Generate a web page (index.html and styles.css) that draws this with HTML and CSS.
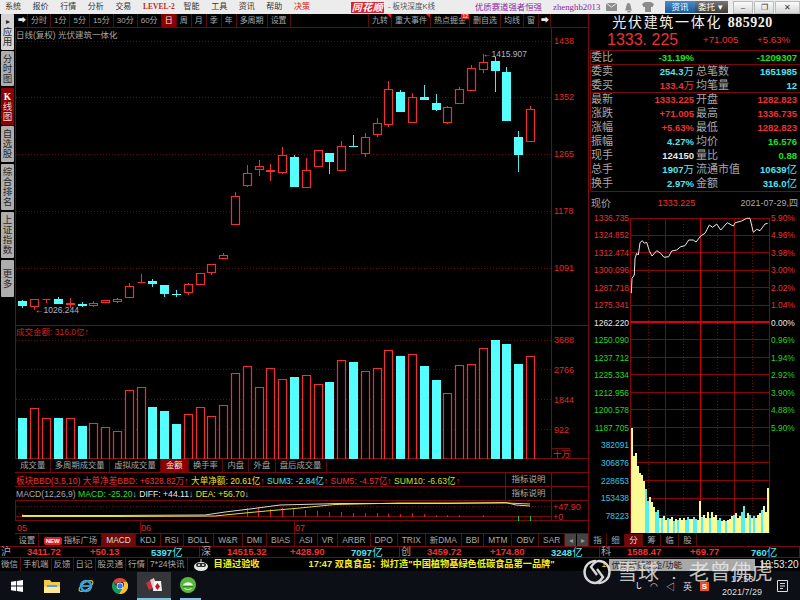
FILE: index.html
```html
<!DOCTYPE html>
<html lang="zh">
<head>
<meta charset="utf-8">
<title>同花顺</title>
<link rel="stylesheet" href="styles.css">
</head>
<body>
<div class="screen">
  <header class="menubar">
    <nav class="menu">
      <span>系统</span><span>报价</span><span>行情</span><span>分析</span><span>交易</span><span class="level2">LEVEL-2</span><span>智能</span><span>工具</span><span>资讯</span><span>帮助</span><span class="decide">决策</span>
    </nav>
    <span class="logo">同花顺</span>
    <span class="doc-title">- 板块深度K线</span>
    <span class="promo">优质赛道强者恒强</span>
    <span class="user">zhenghb2013</span>
    <svg class="top-icons" width="48" height="12" viewBox="0 0 48 12"><path class="ti" d="M0 2h11v8H0z"/><path class="tl" d="M0 2l5.500 4L11 2"/><path class="ti" d="M19 9.500c1-1 1-5 2-6.500 .5-1.500 2.500-1.500 3 0 1 1.500 1 5.500 2 6.500zM21.500 10h3v1.500h-3z"/><path class="ti" d="M36 3l3-2h6l3 2 -1.500 3H45v5h-6V6h-1.500z"/></svg>
    <span class="btn-news">资讯</span>
    <span class="btn-trade">委托<i class="caret">▾</i></span>
    <span class="win-btn">–</span><span class="win-btn">❐</span><span class="win-btn win-close">✕</span>
  </header>

  <div class="workspace">
    <aside class="sidebar">
      <div class="side-tab side-first"><i class="side-arrow">▸</i>应用</div>
      <div class="side-tab side-time">分时图</div>
      <div class="side-tab side-active"><b class="side-k">K</b>线图</div>
      <div class="side-tab side-watch">自选股</div>
      <div class="side-tab side-rank">综合排名</div>
      <div class="side-tab side-rank">上证指数</div>
      <div class="side-tab side-more">更多</div>
    </aside>

    <main class="center">
      <div class="toolbar">
        <span class="tool tool-arrow">➡</span><span class="tool">分时</span><span class="tool">1分</span><span class="tool">5分</span><span class="tool">15分</span><span class="tool">30分</span><span class="tool">60分</span><span class="tool tool-on">日</span><span class="tool">周</span><span class="tool">月</span><span class="tool">季</span><span class="tool">年</span><span class="tool">多周期</span><span class="tool">设置</span>
        <span class="tool-gap"></span>
        <span class="tool tool-flag">九转</span><span class="tool tool-flag">重大事件</span><span class="tool tool-hot">热点掘金<i class="hot-badge">12</i></span><span class="tool">删自选</span><span class="tool">均线</span><span class="tool">窗</span><span class="tool tool-arrow">➡</span>
      </div>

      <svg class="kline" width="573" height="432" viewBox="15 27 573 432">
        <path class="dots" d="M16 41.500H551M16 97.500H551M16 154.500H551M16 211.500H551M16 268.500H551M16 340.500H551M16 369.500H551M16 399.500H551M16 429.500H551"/>
        <path class="frame" d="M15.500 27V459M551.500 27V459M15 325.500H588M15 458.500H588M552 448.500H570V458.500"/>
        <text class="k-title" x="16" y="38">日线(复权) 光伏建筑一体化</text>
        <g class="axis">
          <text x="554" y="44">1438</text><text x="554" y="100">1352</text><text x="554" y="157">1265</text><text x="554" y="214">1178</text><text x="554" y="271">1091</text>
          <text x="554" y="343">3688</text><text x="554" y="373">2766</text><text x="554" y="403">1844</text><text x="554" y="433">922</text>
        </g>
        <text class="unit" x="553" y="457">十万</text>
        <text class="vol-title" x="16" y="335">成交金额: 316.0亿↑</text>

        <path class="wick-red" d="M34.500 306V310M46.500 300V303M70.500 298V308M93.500 301V307M117.500 298V303M129.500 283V298M141.500 274V283M188.500 283V295M200.500 273V285M211.500 264V275M223.500 253V259M235.500 192V225M247.500 165V187M259.500 160V176M270.500 164V181M282.500 147V174M306.500 158V188M318.500 150V167M341.500 141V171M365.500 133V157M377.500 118V137M388.500 81V127M412.500 93V123M447.500 106V124M459.500 87V104M471.500 65V91M483.500 54V73M530.500 106V110"/>
        <path class="wick-cyan" d="M22.500 300V308M58.500 297V304M82.500 302V307M152.500 279V287M164.500 294V297M176.500 290V297M294.500 155V157M329.500 162V174M353.500 135V147M400.500 90V92M424.500 85V98M436.500 94V111M495.500 57V92M506.500 67V72M518.500 131V172"/>
        <path class="body-red" d="M30.500 299.500h8V306.500h-8zM42.500 299.500h8M66.500 303.500h8V304.500h-8zM89.500 303.500h8V305.500h-8zM101.500 300.500h8V302.500h-8zM113.500 299.500h8V301.500h-8zM125.500 286.500h8V297.500h-8zM137.500 282.500h8M184.500 284.500h8V292.500h-8zM196.500 273.500h8V284.500h-8zM207.500 264.500h8V272.500h-8zM219.500 255.500h8V258.500h-8zM231.500 196.500h8V224.500h-8zM243.500 173.500h8V185.500h-8zM255.500 166.500h8V169.500h-8zM266.500 170.500h8V171.500h-8zM278.500 155.500h8V172.500h-8zM302.500 170.500h8V187.500h-8zM314.500 150.500h8V166.500h-8zM337.500 146.500h8V170.500h-8zM361.500 137.500h8V153.500h-8zM373.500 123.500h8V134.500h-8zM384.500 89.500h8V124.500h-8zM408.500 97.500h8V122.500h-8zM443.500 107.500h8V122.500h-8zM455.500 89.500h8V103.500h-8zM467.500 68.500h8V90.500h-8zM479.500 62.500h8V69.500h-8zM526.500 109.500h8V141.500h-8z"/>
        <path class="body-cyan" d="M18 301h9V306h-9zM54 299h9V304h-9zM78 304h9V306h-9zM148 281h9V284h-9zM160 285h9V294h-9zM172 294h9V295h-9zM290 157h9V187h-9zM325 153h9V162h-9zM349 146h9V147h-9zM396 92h9V112h-9zM420 97h9V100h-9zM432 103h9V110h-9zM491 61h9V71h-9zM502 72h9V121h-9zM514 137h9V155h-9z"/>
        <text class="note" x="35" y="313">←1026.244</text>
        <text class="note" x="483" y="57">←1415.907</text>

        <path class="body-red" d="M30.500 408.500h8V459h-8zM42.500 418.500h8V459h-8zM66.500 418.500h8V459h-8zM89.500 423.500h8V459h-8zM101.500 427.500h8V459h-8zM113.500 431.500h8V459h-8zM125.500 390.500h8V459h-8zM137.500 387.500h8V459h-8zM184.500 414.500h8V459h-8zM196.500 407.500h8V459h-8zM207.500 416.500h8V459h-8zM219.500 405.500h8V459h-8zM231.500 373.500h8V459h-8zM243.500 366.500h8V459h-8zM255.500 387.500h8V459h-8zM266.500 368.500h8V459h-8zM278.500 379.500h8V459h-8zM302.500 375.500h8V459h-8zM314.500 384.500h8V459h-8zM337.500 360.500h8V459h-8zM361.500 371.500h8V459h-8zM373.500 368.500h8V459h-8zM384.500 350.500h8V459h-8zM408.500 354.500h8V459h-8zM443.500 393.500h8V459h-8zM455.500 365.500h8V459h-8zM467.500 364.500h8V459h-8zM479.500 348.500h8V459h-8zM526.500 356.500h8V459h-8z"/>
        <path class="body-cyan" d="M18 418h9V459h-9zM54 418h9V459h-9zM78 426h9V459h-9zM148 407h9V459h-9zM160 411h9V459h-9zM172 424h9V459h-9zM290 377h9V459h-9zM325 382h9V459h-9zM349 362h9V459h-9zM396 356h9V459h-9zM420 366h9V459h-9zM432 380h9V459h-9zM491 340h9V459h-9zM502 344h9V459h-9zM514 364h9V459h-9z"/>
      </svg>

      <div class="ind-tabs">
        <span class="ind-tab">成交量</span><span class="ind-tab">多周期成交量</span><span class="ind-tab">虚拟成交量</span><span class="ind-tab ind-on">金额</span><span class="ind-tab">换手率</span><span class="ind-tab">内盘</span><span class="ind-tab">外盘</span><span class="ind-tab">盘后成交量</span>
      </div>

      <div class="ind-row">
        <span class="ind-text"><span class="red">板块BBD(3,5,10) 大单净差BBD: +6328.82万↑</span> <span class="yellow">大单净额: 20.61亿<i class="red">↑</i></span> <span class="cyan">SUM3: -2.84亿<i class="red">↑</i></span> <span class="red">SUM5: -4.57亿↑</span> <span class="lime">SUM10: -6.63亿<i class="red">↑</i></span></span>
        <span class="explain">指标说明</span>
      </div>
      <div class="ind-row">
        <span class="ind-text"><span class="gray">MACD(12,26,9)</span> <span class="green">MACD: -25.20<i class="cyan">↓</i></span> <span class="white">DIFF: +44.11<i class="cyan">↓</i></span> <span class="yellow">DEA: +56.70<i class="cyan">↓</i></span></span>
        <span class="explain">指标说明</span>
      </div>

      <svg class="macd" width="573" height="33" viewBox="15 501 573 33">
        <path class="dots" d="M16 506.500H551"/>
        <path class="frame" d="M15.500 501V521M551.500 501V521M16 516.500H551M15 520.500H588M15 533.500H588M140.500 521V533M294.500 521V533"/>
        <path class="bar-red" d="M22.500 517V514M247.500 517V508M258.500 517V507M270.500 517V509M282.500 517V508M293.500 517V508M305.500 517V510M317.500 517V511M329.500 517V512M341.500 517V512M353.500 517V513M365.500 517V513M377.500 517V513M388.500 517V514M400.500 517V514M412.500 517V513M424.500 517V514M436.500 517V515M447.500 517V515M459.500 517V515M483.500 517V515"/>
        <path class="bar-green" d="M518.500 516V521M530.500 516V521"/>
        <path class="line-white" d="M22 515.500H110L205 515L225 512L250 509L280 505L340 503.500H450L506 502.500L516 505L530 506"/>
        <path class="line-yellow" d="M22 516.500H120L215 516L250 512.500L300 508L335 504.500L400 503H506L530 504"/>
        <g class="axis"><text x="553" y="510">+47.90</text><text x="553" y="520">+0</text></g>
        <g class="axis"><text x="17" y="531">05</text><text x="141" y="531">06</text><text x="295" y="531">07</text></g>
      </svg>

      <div class="sub-tabs">
        <span class="sub-tab sub-first">设置</span><span class="sub-tab sub-market"><i class="new">NEW</i>指标广场</span><span class="sub-tab sub-on">MACD</span><span class="sub-tab">KDJ</span><span class="sub-tab">RSI</span><span class="sub-tab">BOLL</span><span class="sub-tab">W&amp;R</span><span class="sub-tab">DMI</span><span class="sub-tab">BIAS</span><span class="sub-tab">ASI</span><span class="sub-tab">VR</span><span class="sub-tab">ARBR</span><span class="sub-tab">DPO</span><span class="sub-tab">TRIX</span><span class="sub-tab">新DMA</span><span class="sub-tab">BBI</span><span class="sub-tab">MTM</span><span class="sub-tab">OBV</span><span class="sub-tab">SAR</span>
        <span class="pager">◂</span><span class="pager">▸</span>
      </div>
    </main>

    <section class="quote">
      <h1 class="q-name">光伏建筑一体化 <b class="q-code">885920</b></h1>
      <div class="q-price">
        <span class="q-last">1333. 225</span><span class="q-diff">+71.005</span><span class="q-diff">+5.63%</span>
      </div>
      <div class="q-table">
        <div class="q-group q-one">
          <div class="q-row"><span class="q-l">委比</span><span class="q-v green">-31.19%</span><span></span><span class="q-v green">-1209307</span></div>
        </div>
        <div class="q-group q-two">
          <div class="q-row"><span class="q-l">委卖</span><span class="q-v cyan">254.3<i class="q-u">万</i></span><span class="q-l">总笔数</span><span class="q-v cyan">1651985</span></div>
          <div class="q-row"><span class="q-l">委买</span><span class="q-v red">133.4<i class="q-u">万</i></span><span class="q-l">均笔量</span><span class="q-v cyan">12</span></div>
        </div>
        <div class="q-group q-seven">
          <div class="q-row"><span class="q-l">最新</span><span class="q-v red">1333.225</span><span class="q-l">开盘</span><span class="q-v red">1282.823</span></div>
          <div class="q-row"><span class="q-l">涨跌</span><span class="q-v red">+71.005</span><span class="q-l">最高</span><span class="q-v red">1336.735</span></div>
          <div class="q-row"><span class="q-l">涨幅</span><span class="q-v red">+5.63%</span><span class="q-l">最低</span><span class="q-v red">1282.823</span></div>
          <div class="q-row"><span class="q-l">振幅</span><span class="q-v cyan">4.27%</span><span class="q-l">均价</span><span class="q-v green">16.576</span></div>
          <div class="q-row"><span class="q-l">现手</span><span class="q-v white">124150</span><span class="q-l">量比</span><span class="q-v green">0.88</span></div>
          <div class="q-row"><span class="q-l">总手</span><span class="q-v cyan">1907<i class="q-u">万</i></span><span class="q-l">流通市值</span><span class="q-v cyan">10639<i class="q-u">亿</i></span></div>
          <div class="q-row"><span class="q-l">换手</span><span class="q-v cyan">2.97%</span><span class="q-l">金额</span><span class="q-v cyan">316.0<i class="q-u">亿</i></span></div>
        </div>
      </div>
      <div class="t-head">
        <span class="t-label">现价</span><span class="t-price">1333.225</span><span class="t-date">2021-07-29,四</span>
      </div>
      <svg class="timechart" width="211" height="324" viewBox="589 210 211 324">
        <path class="t-dots" d="M648.500 218V533M683.500 218V533M717.500 218V533M752.500 218V533"/>
        <path class="t-grid" d="M630.500 218.500H769.500M630.500 235.500H769.500M630.500 252.500H769.500M630.500 270.500H769.500M630.500 287.500H769.500M630.500 305.500H769.500M630.500 339.500H769.500M630.500 357.500H769.500M630.500 374.500H769.500M630.500 392.500H769.500M630.500 409.500H769.500M630.500 427.500H769.500M630.500 445.500H769.500M630.500 462.500H769.500M630.500 480.500H769.500M630.500 498.500H769.500M630.500 515.500H769.500M630.500 218V533M665.500 218V533M734.500 218V533M769.500 218V533"/>
        <path class="t-strong" d="M700.500 218V533"/>
        <path class="t-zero" d="M630.500 322H769.500"/>
        <polyline class="t-line" points="631.300,293.300 632,278.300 634.300,275 635,258.300 636.700,253.300 638.300,255 640,242.700 642.300,240.700 644.300,243.300 646.700,242.300 649.300,250.700 652,256 656.700,250.700 660.700,253.300 664,257.300 668.700,256.700 671.700,251 676.700,250 680.700,246.700 685,245.700 688.700,240 693.300,240 696,242 700.700,236 705,233.300 709.300,225 712.700,227.300 716.700,224 720.700,230 727.300,222.700 733.300,226 735.300,222.700 741.700,221 746.700,218.300 750,218.300 753.300,232.300 756.700,229.300 760,230.700 765,224 767.700,223.300"/>
        <path class="v-yellow" d="M632 428V533M634 456V533M636 453V533M638 466V533M640 473V533M642 475V533M644 481V533M650 497V533M652 502V533M654 507V533M660 518V533M664 516V533M666 520V533M670 519V533M672 517V533M676 519V533M680 518V533M682 520V533M684 518V533M690 519V533M692 519V533M698 520V533M700 501V533M704 515V533M706 518V533M708 512V533M712 512V533M714 517V533M716 515V533M722 521V533M724 520V533M728 520V533M730 519V533M732 516V533M736 513V533M738 518V533M740 516V533M746 518V533M748 513V533M752 518V533M756 518V533M758 515V533M760 513V533M764 506V533M766 512V533M768 488V533"/>
        <path class="v-cyan" d="M646 489V533M648 501V533M656 512V533M658 510V533M662 518V533M668 518V533M674 521V533M678 520V533M686 520V533M688 517V533M694 517V533M696 519V533M702 517V533M710 518V533M718 520V533M720 518V533M726 521V533M734 515V533M742 512V533M744 506V533M750 515V533M754 516V533M762 510V533"/>
        <g class="t-left">
          <text class="t-red" y="221">1336.735</text><text class="t-red" y="238">1324.852</text><text class="t-red" y="256">1312.474</text><text class="t-red" y="273">1300.096</text><text class="t-red" y="291">1287.718</text><text class="t-red" y="308">1275.341</text>
          <text class="t-white" y="326">1262.220</text>
          <text class="t-green" y="343">1250.090</text><text class="t-green" y="361">1237.712</text><text class="t-green" y="378">1225.334</text><text class="t-green" y="396">1212.956</text><text class="t-green" y="413">1200.578</text><text class="t-green" y="431">1187.705</text>
          <text class="t-cyan" y="448">382091</text><text class="t-cyan" y="466">306876</text><text class="t-cyan" y="484">228653</text><text class="t-cyan" y="501">153438</text><text class="t-cyan" y="519">78223</text>
        </g>
        <g class="t-right">
          <text class="t-red" y="221">5.90%</text><text class="t-red" y="238">4.96%</text><text class="t-red" y="256">3.98%</text><text class="t-red" y="273">3.00%</text><text class="t-red" y="291">2.02%</text><text class="t-red" y="308">1.04%</text>
          <text class="t-white" y="326">0.00%</text>
          <text class="t-green" y="343">0.96%</text><text class="t-green" y="361">1.94%</text><text class="t-green" y="378">2.92%</text><text class="t-green" y="396">3.90%</text><text class="t-green" y="413">4.88%</text><text class="t-green" y="431">5.90%</text>
        </g>
      </svg>
      <div class="q-tabs">
        <span class="q-tab">指</span><span class="q-tab">细</span><span class="q-tab q-tab-on">分</span><span class="q-tab">筹</span><span class="q-tab">临</span><span class="q-tab">股</span>
      </div>
    </section>
  </div>

  <div class="indexbar">
    <div class="idx"><span class="idx-name">沪</span><span class="idx-val red">3411.72</span><span class="idx-val red">+50.13</span><span class="idx-val cyan">5397<i class="idx-u">亿</i></span></div>
    <div class="idx"><span class="idx-name">深</span><span class="idx-val red">14515.32</span><span class="idx-val red">+428.90</span><span class="idx-val cyan">7097<i class="idx-u">亿</i></span></div>
    <div class="idx"><span class="idx-name">创</span><span class="idx-val red">3459.72</span><span class="idx-val red">+174.80</span><span class="idx-val cyan">3248<i class="idx-u">亿</i></span></div>
    <div class="idx"><span class="idx-name">科</span><span class="idx-val red">1588.47</span><span class="idx-val red">+69.77</span><span class="idx-val cyan">760<i class="idx-u">亿</i></span></div>
  </div>

  <div class="bottombar">
    <span class="bot">微信</span><span class="bot">手机端</span><span class="bot">反馈</span><span class="bot">日记</span><span class="bot">股灵通</span><span class="bot">行情</span><span class="bot">7*24快讯</span>
    <svg class="robot" width="18" height="13" viewBox="0 0 18 13"><ellipse cx="9" cy="8.500" rx="7" ry="4.500" fill="#e8e8e8"/><rect x="4" y="5" width="10" height="4" rx="2" fill="#333"/><circle cx="7" cy="7" r="1" fill="#fff"/><circle cx="11" cy="7" r="1" fill="#fff"/><path d="M9 1v3" stroke="#ddd"/></svg>
    <div class="ticker"><span class="tick-a">目通过验收</span><span class="tick-b">17:47 双良食品：拟打造"中国植物基绿色低碳食品第一品牌"</span></div>
    <span class="ad-num">1</span><span class="ad">优质短线资金/功能</span>
    <span class="clock">10:53:20</span>
  </div>

  <footer class="taskbar">
    <svg class="tb-start" width="12" height="12" viewBox="0 0 12 12"><path fill="#fff" d="M0 1.700L5 1V5.600H0zM5.800 .9L12 0V5.600H5.800zM0 6.400H5V11L0 10.300zM5.800 6.400H12V12L5.800 11.100z"/></svg>
    <span class="tb-item tb-folder"><svg width="16" height="15" viewBox="0 0 16 15"><path fill="#f2c94c" d="M0 1h6l1.500 2H16v11H0z"/><path fill="#4aa6e0" d="M3 6h10v2H3z"/><path fill="#fde89a" d="M0 8h16v6H0z"/></svg></span>
    <span class="tb-item"><svg width="16" height="16" viewBox="0 0 16 16"><ellipse class="ie-ring" cx="8" cy="8" rx="8" ry="3.500" transform="rotate(-35 8 8)"/><circle class="ie-e" cx="8" cy="8" r="5"/><path class="ie-bar" d="M4 8h8"/></svg></span>
    <span class="tb-item"><svg width="16" height="16" viewBox="0 0 16 16"><path fill="#db4437" d="M8 0a8 8 0 0 1 7 4H8a4 4 0 0 0-3.800 2.800L1.500 3.300A8 8 0 0 1 8 0z"/><path fill="#0f9d58" d="M1.500 3.300L5 9.500a4 4 0 0 0 4.500 2.300L7 16A8 8 0 0 1 1.500 3.300z"/><path fill="#fbc02d" d="M15 4a8 8 0 0 1-8 12l3.500-6a4 4 0 0 0 .3-6z"/><circle cx="8" cy="8" r="3.400" fill="#fff"/><circle cx="8" cy="8" r="2.700" fill="#3b78e7"/></svg></span>
    <span class="tb-item tb-active"><svg width="18" height="14" viewBox="0 0 18 14"><path fill="#c8323c" d="M1 5l5-3 2 8-4 2z"/><path fill="#e8c8c8" d="M5 2l4-2 3 9-4 2z"/><path fill="#f4f4f4" d="M9 3h7l1 10H8z"/><path fill="#c4161c" d="M12.500 5l2.500 3.500-2.500 3.500-2.500-3.500z"/></svg></span>
    <span class="tb-item tb-open"><svg width="16" height="16" viewBox="0 0 16 16"><circle cx="8" cy="8" r="8" fill="#58b83c"/><path d="M3 8.500c1.500-4 8.500-4.500 10 0z" fill="#eaf8e0"/><path d="M3 9.500h10" stroke="#2f7f22"/><path d="M4.500 11.500c2.500 1.500 5 1.500 7 0" stroke="#eaf8e0" fill="none"/></svg></span>
    <span class="tb-spacer"></span>
    <span class="tray"><i class="tray-i">ᒐ</i><i class="tray-i">◠</i><i class="tray-i">◁</i><i class="tray-i">英</i><i class="sogou">S</i></span>
    <span class="tb-clock"><span>17:53</span><span>2021/7/29</span></span>
    <svg class="tb-note" width="11" height="12" viewBox="0 0 11 12"><path d="M.5 .5h10v11h-10zM3 3.500h5M3 6h5M3 8.500h3" fill="none" stroke="#ddd"/></svg>
  </footer>

  <div class="watermark">
    <svg width="28" height="26" viewBox="0 0 28 26"><path d="M13 2C6 2 1.500 7 1.500 13S6 24 12 24c4 0 6-3 8-6l-6-8" fill="none" stroke="#d8d8d8" stroke-width="2.400"/><path d="M15 24c7 0 11.500-5 11.500-11S22 2 16 2c-4 0-6 3-8 6l6 8" fill="none" stroke="#d8d8d8" stroke-width="2.400"/></svg>
    <span class="wm-a">雪球</span><span class="wm-b">:</span><span class="wm-c">老曾佛虎</span>
  </div>
</div>
</body>
</html>
```

FILE: styles.css
```css
* { box-sizing: border-box; }
html, body { margin: 0; padding: 0; background: #000; }
i { font-style: normal; }
h1 { margin: 0; font-weight: normal; }
svg { display: block; flex: none; }

.screen {
  position: relative;
  width: 800px;
  height: 600px;
  overflow: hidden;
  display: flex;
  flex-direction: column;
  background: #000;
  color: #a8a8a8;
  font-family: "Liberation Sans", "Noto Sans CJK SC", sans-serif;
  font-size: 8.5px;
}

.red { color: #f03030; }
.cyan { color: #4fe6f2; }
.green { color: #1fe01f; }
.yellow { color: #f0e020; }
.lime { color: #c8e020; }
.white { color: #e8e8e8; }
.gray { color: #a8a8b8; }

/* menu bar */
.menubar {
  height: 14px;
  flex: none;
  display: flex;
  align-items: center;
  background: #ececec;
  color: #333;
  line-height: 14px;
  white-space: nowrap;
}
.menubar > * { flex: none; }
.menu { display: flex; gap: 11.6px; padding-left: 5px; width: 351px; font-size: 8px; }
.level2 { color: #c81e28; font-family: "Liberation Serif", serif; font-weight: bold; font-size: 7.5px; width: 29px; }
.decide { color: #d82020; }
.logo {
  width: 33px;
  height: 11px;
  line-height: 11px;
  text-align: center;
  background: #d8242c;
  color: #fff;
  font-style: italic;
  font-weight: bold;
  font-size: 10px;
  letter-spacing: .5px;
}
.doc-title { margin-left: 4px; width: 87px; font-size: 7.5px; color: #555; }
.promo { width: 78px; font-size: 8.4px; color: #8a1fa0; }
.user { width: 53px; font-family: "Liberation Serif", serif; font-size: 8.8px; color: #8a1fa0; }
.top-icons { margin-right: 11px; }
.ti { fill: #8c8c8c; }
.tl { fill: none; stroke: #eee; }
.btn-news {
  width: 30px; height: 12px; line-height: 12px; text-align: center;
  background: linear-gradient(#4a8cc8, #1c5a98); color: #fff; font-size: 8.5px;
}
.btn-trade {
  width: 33px; height: 12px; line-height: 12px; padding-left: 3px; margin-right: 5px;
  background: linear-gradient(#777, #3c3c3c); color: #fff; font-size: 8.5px;
}
.caret { margin-left: 3px; }
.win-btn {
  width: 20px; height: 13px; line-height: 12px; text-align: center;
  background: linear-gradient(#fafafa, #d8d8d8); border: 1px solid #bbb; color: #333; font-size: 8px;
  margin-right: 1px;
}
.win-close { width: 25px; margin-right: 0; }

/* workspace */
.workspace { flex: none; height: 532px; display: flex; }

.sidebar { width: 15px; flex: none; padding-left: 1px; display: flex; flex-direction: column; }
.side-tab {
  width: 13px;
  flex: none;
  display: flex;
  flex-direction: column;
  align-items: center;
  justify-content: center;
  background: #aeaeae;
  color: #2a2a2a;
  font-size: 9.5px;
  line-height: 10px;
  text-align: center;
  word-break: break-all;
  border-radius: 1px;
  margin-bottom: 2px;
}
.side-first { height: 36px; background: #d4d4d4; margin-bottom: 1px; }
.side-arrow { font-size: 8px; line-height: 10px; }
.side-time { height: 35px; margin-bottom: 2px; }
.side-active { height: 37px; background: #8c0000; color: #f0d8d8; margin-bottom: 1px; }
.side-k { color: #fff; font-family: "Liberation Serif", serif; }
.side-watch { height: 36px; }
.side-rank { height: 46px; }
.side-more { height: 37px; }

.center { width: 574px; flex: none; display: flex; flex-direction: column; border-right: 1px solid #7a0a0a; }

.toolbar {
  height: 13px;
  flex: none;
  display: flex;
  line-height: 12px;
  padding: 0 37px 0 1px;
  white-space: nowrap;
  box-shadow: 0 1px 0 #6a0a0a;
  position: relative;
}
.tool { flex: none; padding: 1px 3px 0; border-right: 1px solid #5a0a0a; color: #a8a8a8; font-size: 8px; position: relative; }
.tool-arrow { color: #e8e8e8; width: 12px; padding: 1px 2px 0; font-size: 8px; }
.tool-on { background: #8c0000; color: #eee; }
.tool-gap { flex: 1; border-right: 1px solid #5a0a0a; }
.tool-flag::after, .tool-hot::after {
  content: "";
  position: absolute;
  right: 0;
  top: 0;
  border-top: 4px solid #e02020;
  border-left: 4px solid transparent;
}
.hot-badge {
  position: absolute;
  right: 0;
  top: 0;
  padding: 0 1px;
  background: #e02020;
  color: #fff;
  font-size: 5px;
  line-height: 5px;
  z-index: 1;
}

.dots { stroke: #6a0808; stroke-dasharray: 1 2; fill: none; }
.frame { stroke: #7a0a0a; fill: none; }
.k-title { fill: #a8a8a8; font-size: 8.5px; }
.axis { fill: #e02828; font-size: 9px; }
.unit { fill: #e02828; font-size: 8.5px; }
.vol-title { fill: #d02020; font-size: 8.5px; }
.note { fill: #b4b4c4; font-size: 8.5px; }
.wick-red { stroke: #f03030; fill: none; }
.wick-cyan { stroke: #50e8e8; fill: none; }
.body-red { fill: #000; stroke: #f03030; stroke-width: 1.2; }
.body-cyan { fill: #56ffff; }

.ind-tabs { height: 14px; flex: none; display: flex; line-height: 13px; border-bottom: 1px solid #7a0a0a; padding-left: 1px; font-size: 8.3px; white-space: nowrap; }
.ind-tab { padding: 0 4.3px; border-right: 1px solid #5a0a0a; }
.ind-on { background: #8c0000; color: #eee; padding: 0 5px; }

.ind-row {
  height: 14px;
  flex: none;
  display: flex;
  align-items: center;
  justify-content: space-between;
  border-bottom: 1px solid #7a0a0a;
  padding-left: 1px;
  white-space: nowrap;
  overflow: hidden;
  font-size: 8.6px;
}
.ind-text { flex: 1; overflow: hidden; }
.explain { flex: none; width: 47px; height: 14px; line-height: 13px; margin-right: 36px; text-align: center; border-left: 1px solid #7a0a0a; border-right: 1px solid #7a0a0a; color: #aaa; font-size: 8.5px; }

.bar-red { stroke: #d82020; fill: none; }
.bar-green { stroke: #20d020; fill: none; }
.line-white { stroke: #d8d8d8; fill: none; }
.line-yellow { stroke: #e8e020; fill: none; }

.sub-tabs { height: 12px; flex: none; display: flex; line-height: 12px; padding-left: 1px; font-size: 8.4px; white-space: nowrap; overflow: hidden; }
.sub-tab { flex: none; padding: 0 4px; border-right: 1px solid #5a0a0a; }
.sub-first { padding: 0 2.5px; margin-right: 1px; }
.sub-on { background: #6e0a0a; color: #ddd; }
.new { display: inline-block; background: #e02020; color: #fff; font-size: 6px; font-weight: bold; line-height: 8px; padding: 0 2px; border-radius: 2px; margin-right: 2px; }
.pager { flex: none; width: 11px; margin-right: 1px; text-align: center; background: #444; color: #999; }

/* quote panel */
.quote { width: 211px; flex: none; display: flex; flex-direction: column; }
.q-name { height: 18px; line-height: 17px; padding-right: 4px; text-align: center; color: #f0f0f0; font-size: 14px; letter-spacing: 1.7px; white-space: nowrap; }
.q-code { font-family: "Liberation Serif", serif; letter-spacing: .5px; font-size: 14px; }
.q-price { height: 18px; display: flex; align-items: center; color: #f03030; white-space: nowrap; padding-bottom: 3px; }
.q-price > * { flex: none; }
.q-last { font-size: 16px; margin-left: 18px; width: 96px; }
.q-diff { font-size: 9.7px; width: 54px; }
.q-table { height: 141px; flex: none; border-top: 1px solid #7a0a0a; border-left: 1px solid #7a0a0a; margin-left: 1px; }
.q-group { border-bottom: 1px solid #7a0a0a; }
.q-row {
  height: 14px;
  display: grid;
  grid-template-columns: 30px 73px 1fr auto;
  padding-right: 3px;
  line-height: 13px;
  white-space: nowrap;
}
.q-one .q-row { height: 13px; }
.q-two .q-row { height: 13.5px; }
.q-l { font-size: 11px; color: #a8a8a8; }
.q-l:nth-child(3) { margin-left: 2px; }
.q-v { font-size: 9.5px; font-weight: bold; text-align: right; }
.q-u { font-size: 10.5px; font-weight: normal; }

.t-head { height: 19px; flex: none; display: flex; align-items: flex-end; padding: 0 2px 0; line-height: 13px; white-space: nowrap; }
.t-label { width: 67px; font-size: 10px; }
.t-price { width: 83px; color: #f03030; font-size: 9px; }
.t-date { color: #a8a8b8; font-size: 9px; }

.t-dots { stroke: #6a0808; stroke-dasharray: 1 2; fill: none; }
.t-grid { stroke: #880606; fill: none; }
.t-strong { stroke: #c00; fill: none; }
.t-zero { stroke: #d00; stroke-width: 2; fill: none; }
.t-line { stroke: #e8e8e8; fill: none; stroke-width: 1; }
.v-yellow { stroke: #fafa96; stroke-width: 2; fill: none; }
.v-cyan { stroke: #50f0f0; stroke-width: 2; fill: none; }
.t-left text { font-size: 8.4px; text-anchor: end; transform: translateX(629px); }
.t-right text { font-size: 8.4px; transform: translateX(771px); }
.t-red { fill: #e83030; }
.t-white { fill: #e8e8e8; }
.t-green { fill: #20d820; }
.t-cyan { fill: #30c8e0; }

.q-tabs { height: 12px; flex: none; display: flex; line-height: 12px; font-size: 8.5px; }
.q-tab { width: 18px; text-align: center; border-right: 1px solid #5a0a0a; }
.q-tab-on { background: #6e0a0a; color: #ddd; }

/* index row */
.indexbar {
  height: 12px;
  flex: none;
  display: grid;
  grid-template-columns: repeat(4, 200px);
  border-top: 1px solid #7a0a0a;
  border-bottom: 1px solid #7a0a0a;
  line-height: 10px;
}
.idx { display: grid; grid-template-columns: 27px 63px 61px 1fr; border-right: 1px solid #7a0a0a; white-space: nowrap; }
.idx-name { font-size: 10px; color: #aaa; padding-left: 1px; }
.idx-val { font-size: 9.5px; font-weight: bold; }
.idx-u { font-size: 10.5px; font-weight: normal; }

/* bottom row */
.bottombar {
  height: 14px;
  flex: none;
  display: flex;
  align-items: center;
  line-height: 13px;
  border-bottom: 1px solid #2a0606;
  white-space: nowrap;
  overflow: hidden;
}
.bottombar > * { flex: none; }
.bot { padding: 0 2px; border-right: 1px solid #5a0a0a; font-size: 8.5px; height: 13px; }
.bot:first-child { padding-left: 1px; }
.robot { margin: 0 4px; }
.ticker { width: 382px; overflow: hidden; color: #f0f020; font-weight: bold; font-size: 9.2px; display: flex; }
.tick-a { width: 95px; flex: none; }
.ad-num { width: 7px; color: #f0e020; font-size: 8.5px; margin-left: 6px; }
.ad { width: 146px; height: 12px; line-height: 12px; background: #a8a8a8; color: #222; font-size: 8.5px; padding-left: 3px; }
.clock { margin-left: 5px; color: #e8e8e8; font-size: 10px; }

/* taskbar */
.taskbar { height: 28px; flex: none; display: flex; align-items: center; background: #0c0f15; color: #ddd; }
.taskbar > * { flex: none; }
.tb-start { margin: 0 23px 0 11px; }
.tb-item { width: 34px; height: 28px; display: flex; align-items: center; justify-content: center; }
.tb-folder { margin-left: -11px; }
.tb-active { background: #34363a; border-bottom: 2px solid #7cc4e0; }
.tb-open { border-bottom: 2px solid #7cc4e0; width: 21px; margin-left: 9px; justify-content: flex-start; }
.ie-ring { fill: none; stroke: #e8b830; stroke-width: 1.2; }
.ie-e { fill: none; stroke: #29a8e8; stroke-width: 2.5; }
.ie-bar { stroke: #29a8e8; stroke-width: 1.8; }
.tb-spacer { flex: 1; }
.tray { display: flex; align-items: center; gap: 8px; margin-right: 13px; font-size: 9px; }
.sogou { width: 9px; height: 9px; line-height: 9px; background: #e8501e; color: #fff; font-weight: bold; text-align: center; font-size: 8px; }
.tb-clock { display: flex; flex-direction: column; align-items: center; font-size: 9px; line-height: 13px; margin-right: 15px; }
.tb-note { margin-right: 12px; }

/* watermark over the window */
.watermark {
  position: absolute;
  left: 583px;
  top: 559px;
  display: flex;
  align-items: center;
  color: rgba(235, 235, 235, .82);
  font-size: 21px;
  line-height: 26px;
  white-space: nowrap;
}
.wm-a { margin-left: 6px; }
.wm-b { margin: 0 12px; }
```
